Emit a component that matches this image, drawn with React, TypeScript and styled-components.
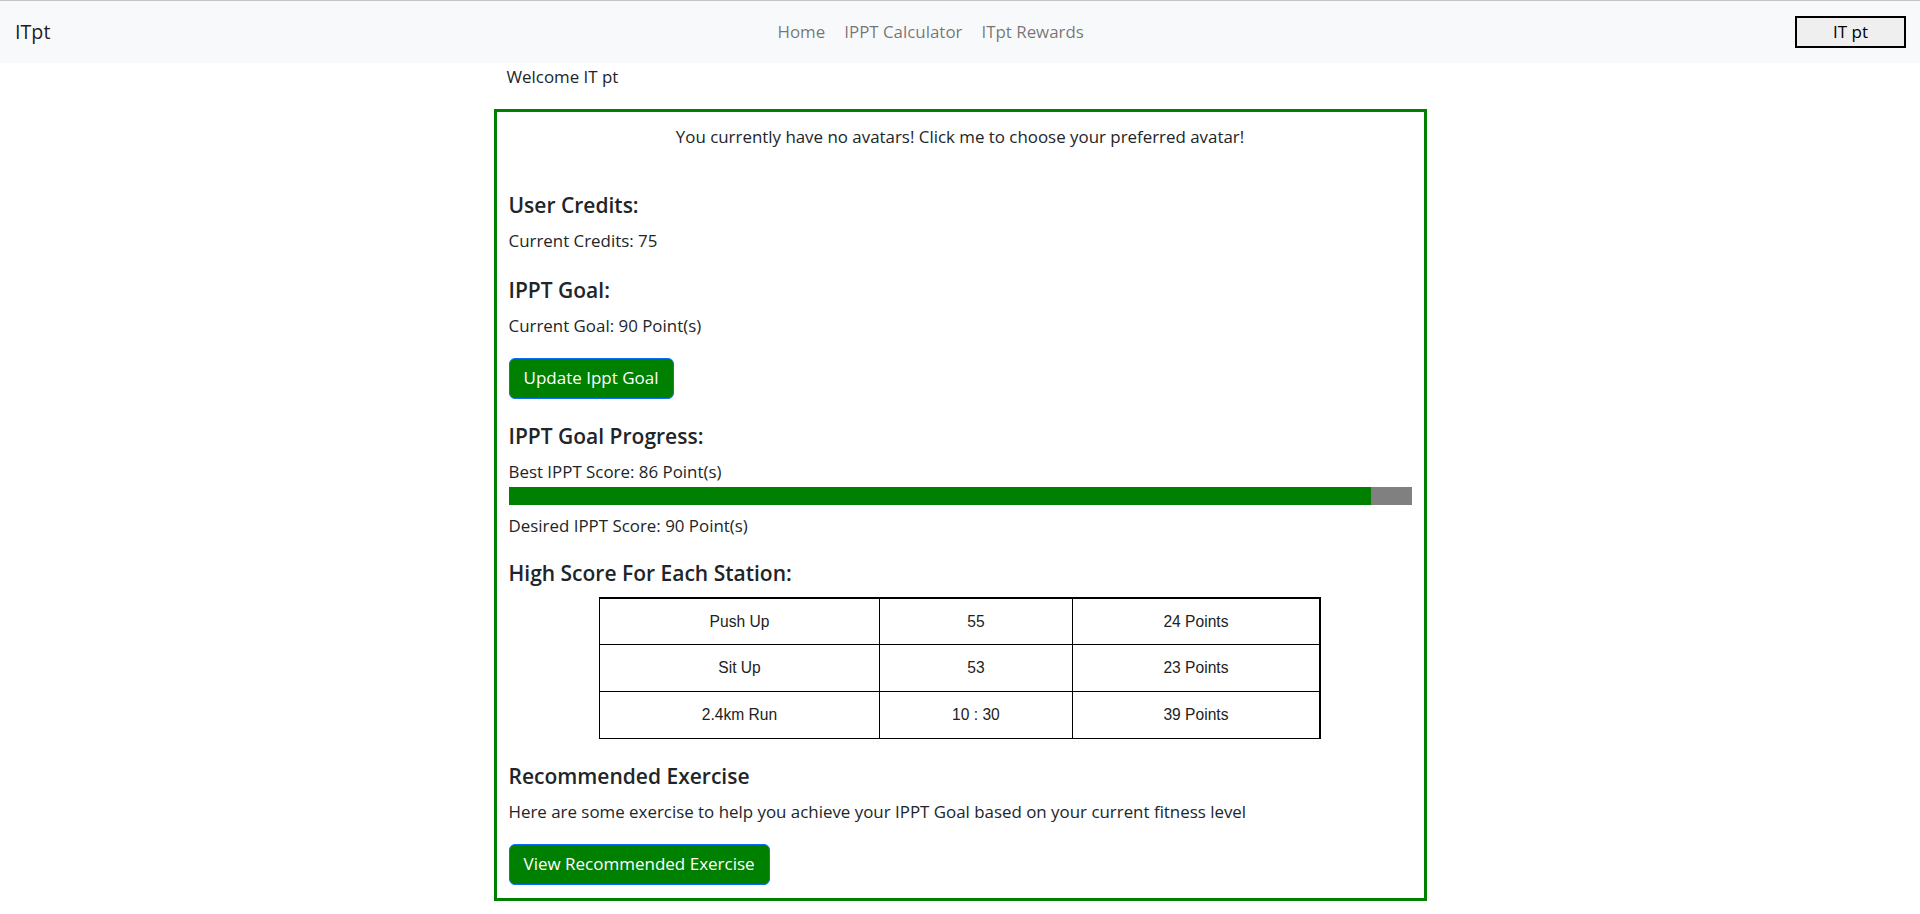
import React from "react";
import styled, { createGlobalStyle } from "styled-components";

const GlobalStyle = createGlobalStyle`
  *, *::before, *::after { box-sizing: border-box; }
  html, body { margin: 0; padding: 0; background: #ffffff; }
  body {
    font-family: "Open Sans", "Noto Sans", sans-serif;
    font-size: 16.9px;
    line-height: 24px;
    color: #212529;
  }
`;

const Navbar = styled.header`
  display: flex;
  align-items: center;
  height: 63px;
  padding: 0 14px 0 15px;
  background: #f8f9fa;
  border-top: 1px solid #c4c4c4;
`;

const Brand = styled.a`
  font-size: 19.7px;
  line-height: 30px;
  color: rgba(0, 0, 0, 0.9);
  text-decoration: none;
  margin-right: 16px;
`;

const NavList = styled.nav`
  display: flex;
  margin: 0 auto;
`;

const NavLink = styled.a`
  padding: 0 9.5px;
  font-size: 16.9px;
  line-height: 24px;
  color: rgba(0, 0, 0, 0.55);
  text-decoration: none;
`;

const UserButton = styled.button`
  width: 111px;
  height: 32px;
  padding: 0;
  border: 2px solid #000000;
  background: #efefef;
  color: #000000;
  font-family: "Open Sans", "Noto Sans", sans-serif;
  font-size: 17px;
  line-height: 26px;
`;

const Main = styled.main`
  width: 933px;
  margin: 0 auto;
`;

const Welcome = styled.p`
  margin: 2px 0 20px;
  padding-left: 13px;
`;

const Card = styled.section`
  border: 3px solid #008000;
  padding: 13px 12px 13px;
`;

const AvatarPrompt = styled.p`
  margin: 0;
  text-align: center;
  cursor: pointer;
`;

const Heading = styled.h5<{ $gap: number; $after?: number }>`
  margin: ${(p) => p.$gap}px 0 ${(p) => p.$after ?? 11}px;
  font-size: 21px;
  font-weight: 600;
  line-height: 25.2px;
  color: #212529;
`;

const Text = styled.p<{ $gap?: number }>`
  margin: ${(p) => p.$gap ?? 0}px 0 0;
`;

const ActionButton = styled.button`
  display: block;
  margin-top: 20px;
  height: 41px;
  padding: 0 14px;
  border: 1px solid #0d6efd;
  border-radius: 6px;
  background: #008000;
  color: #ffffff;
  font-family: "Open Sans", "Noto Sans", sans-serif;
  font-size: 17px;
  line-height: 24px;
`;

const ProgressTrack = styled.div`
  display: flex;
  height: 18px;
  margin-top: 3px;
  background: #808080;
`;

const ProgressFill = styled.div`
  height: 100%;
  background: #008000;
`;

const ScoreTable = styled.table`
  width: 80%;
  margin: 0 auto;
  border-collapse: collapse;
  border-top: 2px solid #000000;
  border-right: 2px solid #000000;
  font-family: "Liberation Sans", Arial, sans-serif;
  font-size: 15.6px;
  color: #222222;
  table-layout: fixed;
`;

const Cell = styled.td`
  height: 47px;
  padding: 0;
  border: 1px solid #000000;
  text-align: center;
  vertical-align: middle;
`;

const stations = [
  { name: "Push Up", value: "55", points: "24 Points" },
  { name: "Sit Up", value: "53", points: "23 Points" },
  { name: "2.4km Run", value: "10 : 30", points: "39 Points" },
];

const best = 86;
const goal = 90;

export default function App() {
  return (
    <>
      <GlobalStyle />
      <Navbar>
        <Brand href="#">ITpt</Brand>
        <NavList>
          <NavLink href="#">Home</NavLink>
          <NavLink href="#">IPPT Calculator</NavLink>
          <NavLink href="#">ITpt Rewards</NavLink>
        </NavList>
        <UserButton>IT pt</UserButton>
      </Navbar>
      <Main>
        <Welcome>Welcome IT pt</Welcome>
        <Card>
          <AvatarPrompt>You currently have no avatars! Click me to choose your preferred avatar!</AvatarPrompt>

          <Heading $gap={43.5}>User Credits:</Heading>
          <Text>Current Credits: 75</Text>

          <Heading $gap={25}>IPPT Goal:</Heading>
          <Text>Current Goal: {goal} Point(s)</Text>
          <ActionButton>Update Ippt Goal</ActionButton>

          <Heading $gap={25}>IPPT Goal Progress:</Heading>
          <Text>Best IPPT Score: {best} Point(s)</Text>
          <ProgressTrack>
            <ProgressFill style={{ width: `${(best / goal) * 100}%` }} />
          </ProgressTrack>
          <Text $gap={9}>Desired IPPT Score: {goal} Point(s)</Text>

          <Heading $gap={22.5}>High Score For Each Station:</Heading>
          <ScoreTable>
            <colgroup>
              <col style={{ width: "38.9%" }} />
              <col style={{ width: "26.7%" }} />
              <col style={{ width: "34.4%" }} />
            </colgroup>
            <tbody>
              {stations.map((s) => (
                <tr key={s.name}>
                  <Cell>{s.name}</Cell>
                  <Cell>{s.value}</Cell>
                  <Cell>{s.points}</Cell>
                </tr>
              ))}
            </tbody>
          </ScoreTable>

          <Heading $gap={24.5} $after={10.5}>Recommended Exercise</Heading>
          <Text>Here are some exercise to help you achieve your IPPT Goal based on your current fitness level</Text>
          <ActionButton>View Recommended Exercise</ActionButton>
        </Card>
      </Main>
    </>
  );
}
